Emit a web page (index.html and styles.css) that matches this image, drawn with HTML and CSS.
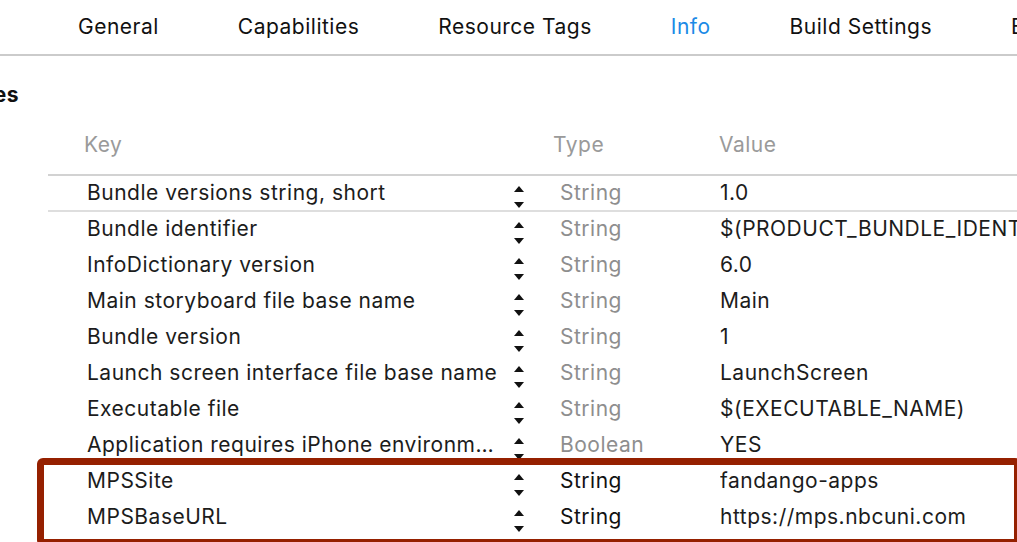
FILE: index.html
```html
<!DOCTYPE html>
<html>
<head>
<meta charset="utf-8">
<link rel="stylesheet" href="styles.css">
</head>
<body>
<nav class="tabs">
  <span class="tab">General</span>
  <span class="tab">Capabilities</span>
  <span class="tab">Resource Tags</span>
  <span class="tab active">Info</span>
  <span class="tab">Build Settings</span>
  <span class="tab">Build Phases</span>
</nav>
<section class="section">
  <div class="heading"><span>Custom iOS Target Properties</span></div>
  <div class="table">
    <div class="row head">
      <span class="key">Key</span>
      <span class="step-sp"></span>
      <span class="type">Type</span>
      <span class="value">Value</span>
    </div>
    <div class="row first">
      <span class="key">Bundle versions string, short</span>
      <span class="stepper"><i class="up"></i><i class="down"></i></span>
      <span class="type">String</span>
      <span class="value">1.0</span>
    </div>
    <div class="row">
      <span class="key">Bundle identifier</span>
      <span class="stepper"><i class="up"></i><i class="down"></i></span>
      <span class="type">String</span>
      <span class="value">$(PRODUCT_BUNDLE_IDENTIFIER)</span>
    </div>
    <div class="row">
      <span class="key">InfoDictionary version</span>
      <span class="stepper"><i class="up"></i><i class="down"></i></span>
      <span class="type">String</span>
      <span class="value">6.0</span>
    </div>
    <div class="row">
      <span class="key">Main storyboard file base name</span>
      <span class="stepper"><i class="up"></i><i class="down"></i></span>
      <span class="type">String</span>
      <span class="value">Main</span>
    </div>
    <div class="row">
      <span class="key">Bundle version</span>
      <span class="stepper"><i class="up"></i><i class="down"></i></span>
      <span class="type">String</span>
      <span class="value">1</span>
    </div>
    <div class="row">
      <span class="key">Launch screen interface file base name</span>
      <span class="stepper"><i class="up"></i><i class="down"></i></span>
      <span class="type">String</span>
      <span class="value">LaunchScreen</span>
    </div>
    <div class="row">
      <span class="key">Executable file</span>
      <span class="stepper"><i class="up"></i><i class="down"></i></span>
      <span class="type">String</span>
      <span class="value">$(EXECUTABLE_NAME)</span>
    </div>
    <div class="row">
      <span class="key">Application requires iPhone environm…</span>
      <span class="stepper"><i class="up"></i><i class="down"></i></span>
      <span class="type">Boolean</span>
      <span class="value">YES</span>
    </div>
    <div class="row custom">
      <span class="key">MPSSite</span>
      <span class="stepper"><i class="up"></i><i class="down"></i></span>
      <span class="type">String</span>
      <span class="value">fandango-apps</span>
    </div>
    <div class="row custom">
      <span class="key">MPSBaseURL</span>
      <span class="stepper"><i class="up"></i><i class="down"></i></span>
      <span class="type">String</span>
      <span class="value">https://mps.nbcuni.com</span>
    </div>
  </div>
</section>
<div class="highlight"></div>
</body>
</html>
```

FILE: styles.css
```css
html, body {
  margin: 0;
  padding: 0;
  overflow: hidden;
  background: #ffffff;
}
body {
  width: 1017px;
  height: 542px;
  position: relative;
  font-family: "Inter", "Liberation Sans", sans-serif;
  font-size: 21px;
  letter-spacing: 0.5px;
  color: #1c1c1c;
}
.tabs {
  display: flex;
  align-items: center;
  box-sizing: border-box;
  height: 56px;
  padding-left: 78px;
  padding-bottom: 2px;
  gap: 79px;
  border-bottom: 2px solid #cbcbcb;
  white-space: nowrap;
  overflow: hidden;
}
.tab { color: #111; }
.tab.active { color: #1b8ae6; }

.heading {
  display: flex;
  justify-content: flex-end;
  width: 19px;
  overflow: hidden;
  white-space: nowrap;
  font-weight: 700;
  line-height: 24px;
  margin-top: 27px;
  color: #111;
}

.table {
  margin-left: 48px;
  margin-top: 20px;
}
.row {
  display: grid;
  grid-template-columns: 427px 10px 196px 1fr;
  grid-template-rows: 32px;
  align-items: center;
  box-sizing: border-box;
  height: 36px;
  padding-left: 39px;
  padding-bottom: 4px;
  white-space: nowrap;
}
.row .type { padding-left: 36px; color: #8e8e8e; }
.row .value { overflow: hidden; }
.row.head {
  height: 49px;
  grid-template-rows: 36px;
  align-items: start;
  line-height: 36px;
  padding-left: 36px;
  padding-bottom: 0;
  grid-template-columns: 430px 10px 195px 1fr;
  color: #9a9a9a;
  border-bottom: 2px solid #d2d2d2;
}
.row.head .type { padding-left: 29px; color: #9a9a9a; }
.row.first {
  border-bottom: 2px solid #dedede;
}
.row.custom .type { color: #111; }

.stepper {
  display: flex;
  flex-direction: column;
  gap: 10px;
  transform: translateY(5px);
}
.stepper i {
  display: block;
  width: 0;
  height: 0;
  border-left: 5px solid transparent;
  border-right: 5px solid transparent;
}
.stepper .up { border-bottom: 6px solid #111; }
.stepper .down { border-top: 6px solid #111; }

.highlight {
  position: absolute;
  left: 37px;
  top: 458px;
  width: 984px;
  height: 88px;
  box-sizing: border-box;
  border: 7px solid #952000;
  border-radius: 6px;
}
```
